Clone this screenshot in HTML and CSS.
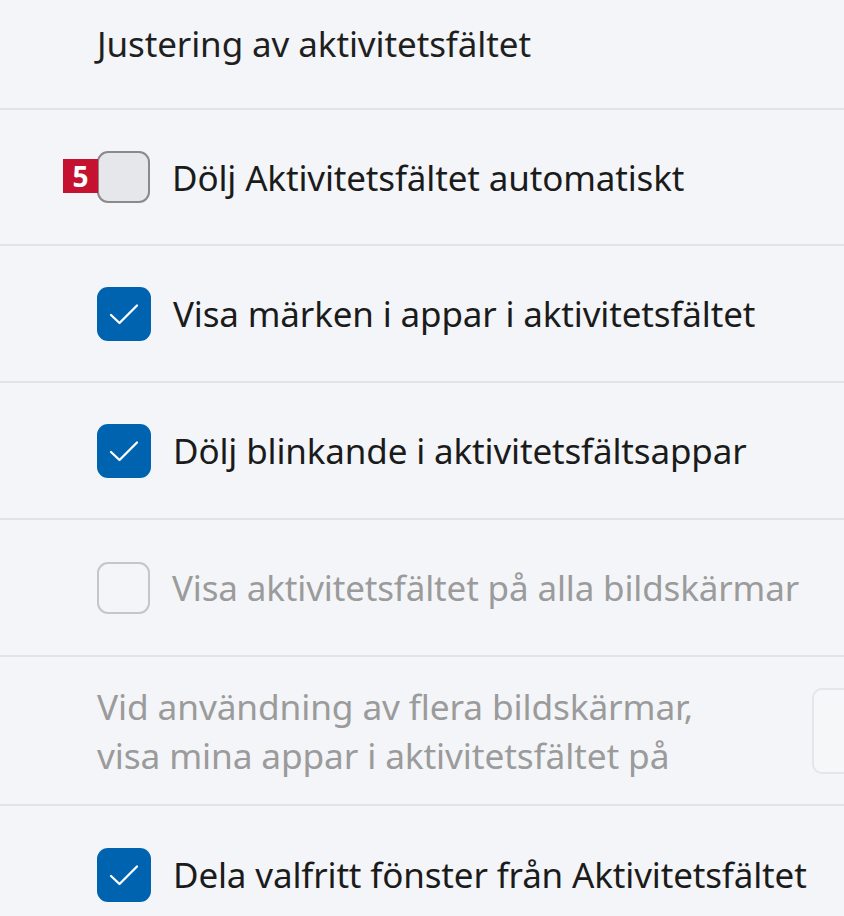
FILE: index.html
```html
<!DOCTYPE html>
<html lang="sv">
<head>
<meta charset="utf-8">
<link rel="stylesheet" href="styles.css">
</head>
<body>
<div class="list">
  <div class="row header"><span class="title">Justering av aktivitetsfältet</span></div>
  <div class="row first">
    <span class="badge">5</span>
    <span class="box off"></span>
    <span class="label">Dölj Aktivitetsfältet automatiskt</span>
  </div>
  <div class="row">
    <span class="box on"><svg viewBox="0 0 54 54" width="54" height="54"><path d="M14 28 L22.5 36 L40 18.5" fill="none" stroke="#fff" stroke-width="2.3" stroke-linecap="round" stroke-linejoin="round"/></svg></span>
    <span class="label">Visa märken i appar i aktivitetsfältet</span>
  </div>
  <div class="row">
    <span class="box on"><svg viewBox="0 0 54 54" width="54" height="54"><path d="M14 28 L22.5 36 L40 18.5" fill="none" stroke="#fff" stroke-width="2.3" stroke-linecap="round" stroke-linejoin="round"/></svg></span>
    <span class="label">Dölj blinkande i aktivitetsfältsappar</span>
  </div>
  <div class="row">
    <span class="box disabled"></span>
    <span class="label dim">Visa aktivitetsfältet på alla bildskärmar</span>
  </div>
  <div class="row multi">
    <span class="label dim two">Vid användning av flera bildskärmar,<br>visa mina appar i aktivitetsfältet på</span>
    <span class="dropdown"></span>
  </div>
  <div class="row last">
    <span class="box on"><svg viewBox="0 0 54 54" width="54" height="54"><path d="M14 28 L22.5 36 L40 18.5" fill="none" stroke="#fff" stroke-width="2.3" stroke-linecap="round" stroke-linejoin="round"/></svg></span>
    <span class="label">Dela valfritt fönster från Aktivitetsfältet</span>
  </div>
</div>
</body>
</html>
```
FILE: styles.css
```css
html, body {
  margin: 0;
  padding: 0;
  background: #f3f5f8;
}
body {
  width: 844px;
  height: 916px;
  overflow: hidden;
  font-family: "Noto Sans", "Open Sans", sans-serif;
  color: #1b1b1b;
}
.list {
  display: flex;
  flex-direction: column;
}
.row {
  position: relative;
  display: flex;
  align-items: center;
  flex: none;
  height: 137px;
  padding-left: 97px;
  border-bottom: 2px solid #e0e3e7;
  box-sizing: border-box;
}
.row.first {
  height: 136px;
}
.row.header {
  height: 110px;
  padding-bottom: 22px;
}
.row.multi {
  height: 149px;
  justify-content: space-between;
}
.row.last {
  border-bottom: none;
}
.title {
  font-size: 35px;
  letter-spacing: -0.1px;
  color: #1f1f1f;
}
.label {
  font-size: 35px;
  margin-left: 22px;
  letter-spacing: -0.15px;
  white-space: nowrap;
}
.label.dim {
  color: #9b9b9b;
}
.label.two {
  margin-left: 0;
  line-height: 49px;
  font-size: 35.3px;
}
.box {
  width: 53px;
  height: 52px;
  border-radius: 11px;
  box-sizing: border-box;
  flex: none;
  display: flex;
  align-items: center;
  justify-content: center;
}
.box svg { display: block; }
.box.off {
  background: #e6e7ea;
  border: 2.5px solid #8a8a8a;
}
.box.on {
  width: 54px;
  height: 54px;
  background: #0063b0;
}
.box.disabled {
  border: 2.5px solid #c6c6c6;
  background: transparent;
}
.badge {
  position: absolute;
  left: 63px;
  top: 50%;
  margin-top: -18px;
  width: 35px;
  height: 34px;
  background: #c41230;
  color: #fff;
  font-family: "Noto Sans", sans-serif;
  font-weight: 700;
  font-size: 28px;
  line-height: 34px;
  text-align: center;
}
.dropdown {
  width: 60px;
  height: 86px;
  margin-right: -28px;
  border: 2px solid #e4e6e9;
  border-radius: 10px;
  background: #f6f7f9;
  box-sizing: border-box;
  flex: none;
}
```
